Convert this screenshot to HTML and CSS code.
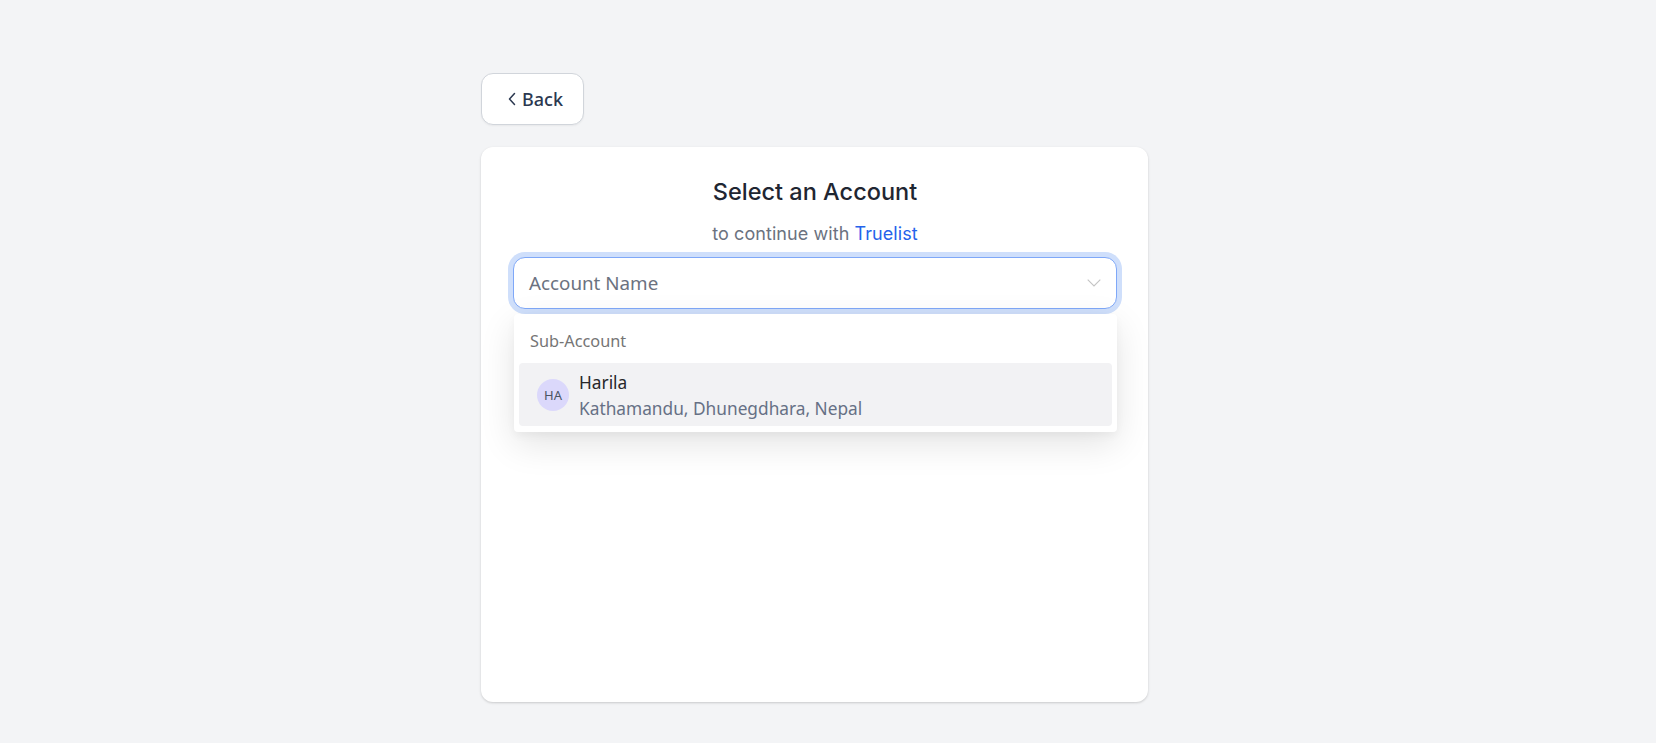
FILE: index.html
```html
<!DOCTYPE html>
<html lang="en">
<head>
<meta charset="utf-8">
<title>Select an Account</title>
<link rel="stylesheet" href="styles.css">
</head>
<body>
<main class="page">
  <button class="back" type="button">
    <svg class="back-icon" viewBox="0 0 10 16" width="10" height="16" aria-hidden="true"><path d="M7.5 2.5 2.5 8l5 5.5" fill="none" stroke="currentColor" stroke-width="1.5" stroke-linecap="round" stroke-linejoin="round"/></svg>
    <span>Back</span>
  </button>
  <section class="card">
    <h1 class="title">Select an Account</h1>
    <p class="subtitle">to continue with <a class="brand" href="#">Truelist</a></p>
    <div class="select-wrap">
      <div class="select">
        <span class="placeholder">Account Name</span>
        <svg class="chevron" viewBox="0 0 14 8" width="14" height="8" aria-hidden="true"><path d="M.7.7 7 7 13.3.7" fill="none" stroke="currentColor" stroke-width="1.1"/></svg>
      </div>
      <div class="menu">
        <div class="menu-label">Sub-Account</div>
        <div class="option">
          <span class="avatar">HA</span>
          <div class="option-text">
            <div class="option-name">Harila</div>
            <div class="option-addr">Kathamandu, Dhunegdhara, Nepal</div>
          </div>
        </div>
      </div>
    </div>
  </section>
</main>
</body>
</html>
```
FILE: styles.css
```css
* { box-sizing: border-box; }
html, body { margin: 0; height: 100%; }
body { background: #f3f4f6; font-family: "Noto Sans", sans-serif; overflow: hidden; }
.page { width: 667px; margin-left: 481px; padding-top: 73px; display: flex; flex-direction: column; align-items: flex-start; gap: 22px; }
.back {
  width: 103px; height: 52px; padding: 0 0 0 25px;
  display: flex; align-items: center; gap: 5px;
  background: #fff; border: 1px solid #d1d5db; border-radius: 12px;
  box-shadow: 0 1px 2px rgba(0,0,0,.05);
  color: #2b3850; font: 500 18px "Noto Sans", sans-serif;
}
.back-icon { display: block; }
.card {
  width: 667px; height: 555px; padding: 29px 31px 0 32px;
  background: #fff; border-radius: 12px;
  box-shadow: 0 1px 3px rgba(0,0,0,.12), 0 1px 2px rgba(0,0,0,.06);
}
.title { margin: 0; text-align: center; font: 500 23.5px/32px Inter, sans-serif; color: #1f2632; }
.subtitle { margin: 12px 0 0; text-align: center; font: 400 18px/28px Inter, sans-serif; letter-spacing: .07px; color: #6b7280; }
.brand { color: #2563eb; text-decoration: none; }
.select-wrap { position: relative; margin-top: 9px; }
.select {
  height: 52px; padding: 0 15px;
  display: flex; align-items: center; justify-content: space-between;
  background: #fff; border: 1px solid #7fa8f8; border-radius: 12px;
  box-shadow: 0 0 0 5px #cfdffb;
}
.placeholder { font-size: 18.8px; color: #6b7280; }
.chevron { color: #c4c4c4; display: block; }
.menu {
  position: absolute; left: 1px; right: 0; top: 57px; height: 118px; padding: 5px;
  background: #fff; border-radius: 4px;
  box-shadow: 0 12px 36px rgba(0,0,0,.11), 0 4px 8px rgba(0,0,0,.04);
}
.menu-label { height: 44px; padding: 10px 11px 0; font-size: 16.3px; line-height: 24px; color: #757575; }
.option { height: 63px; padding-left: 18px; display: flex; align-items: center; gap: 10px; background: #f2f2f4; border-radius: 4px; }
.avatar { width: 32px; height: 32px; border-radius: 50%; background: #dbd8fb; display: flex; align-items: center; justify-content: center; font: 400 13px "Noto Sans", sans-serif; color: #4b5563; }
.option-text { align-self: flex-start; padding-top: 7px; }
.option-name { font-size: 17.3px; line-height: 26px; color: #27272a; }
.option-addr { font-size: 17.3px; line-height: 25px; color: #667085; }
```
